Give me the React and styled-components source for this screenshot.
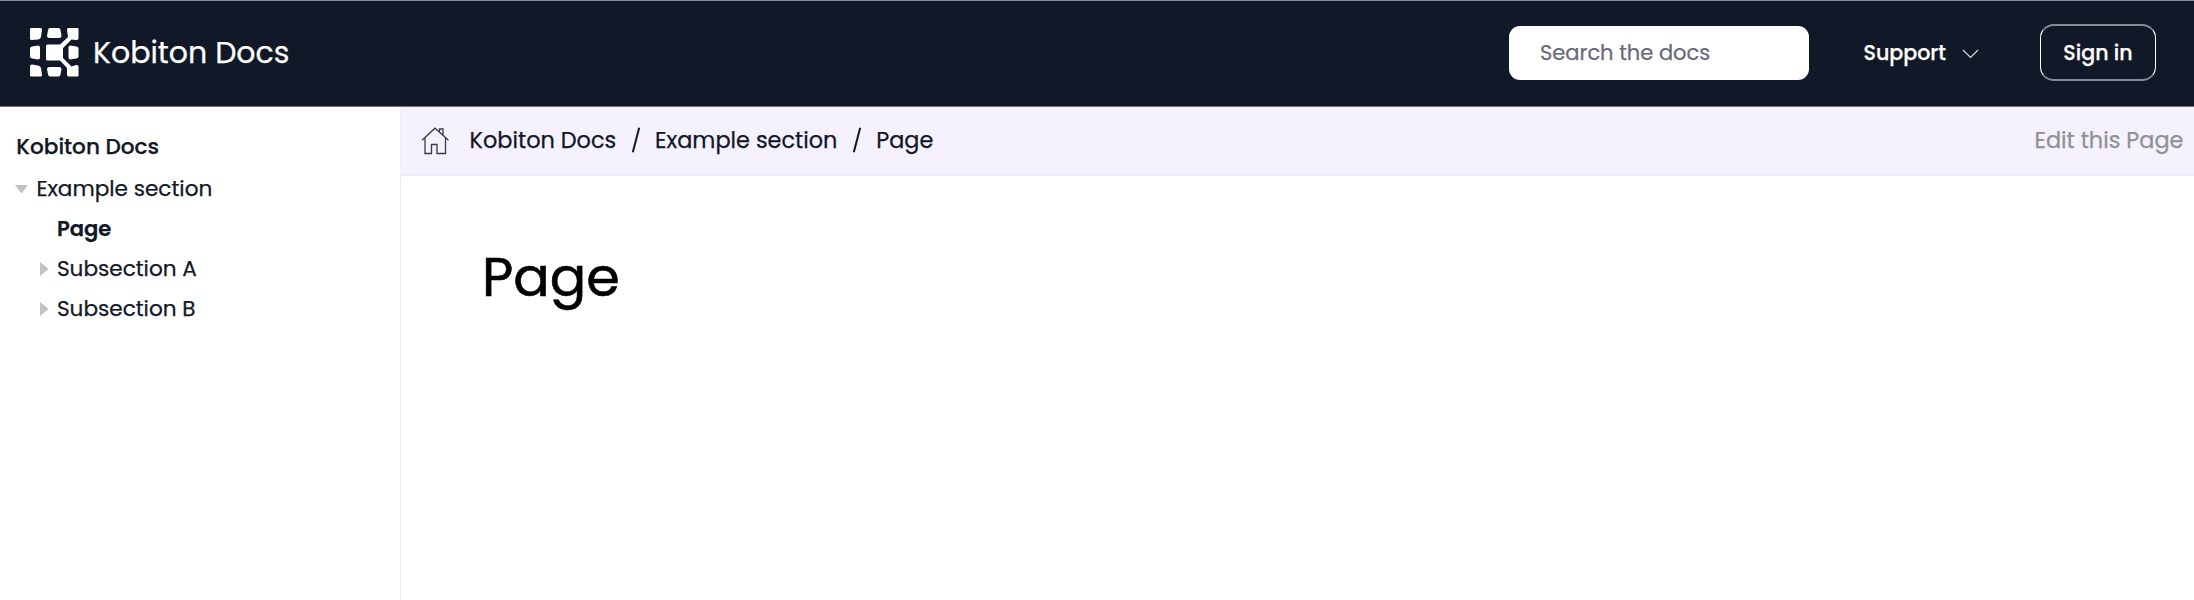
import React from "react";
import styled, { createGlobalStyle } from "styled-components";

const GlobalStyle = createGlobalStyle`
  *, *::before, *::after { box-sizing: border-box; }
  body {
    margin: 0;
    background: #fff;
    color: #111827;
    font-family: Poppins, Inter, "Liberation Sans", sans-serif;
    font-feature-settings: "cv11" 1;
    font-size: 21.6px;
    line-height: 40px;
    -webkit-font-smoothing: antialiased;
    -webkit-text-stroke: 0.25px currentColor;
  }
`;

const Page = styled.div`
  display: flex;
  flex-direction: column;
  height: 600px;
  overflow: hidden;
`;

const Text = styled.span`
  font-size: ${(p) => p.$size || 21.6}px;
  font-weight: ${(p) => p.$weight || 400};
  white-space: nowrap;
`;

const Header = styled.header`
  display: flex;
  align-items: center;
  height: 107px;
  flex: none;
  padding: 0 38px 2px 30px;
  background: #111827;
  border-top: 1px solid #878c95;
  border-bottom: 1px solid #70747d;
  color: #fff;
`;

const Brand = styled.a`
  display: flex;
  align-items: center;
  gap: 14px;
  margin-right: auto;
`;

const Logo = styled.svg`
  display: block;
  width: 49px;
  height: 49px;
`;

const SearchBox = styled.div`
  display: flex;
  align-items: center;
  width: 300px;
  height: 54px;
  margin: 0 54px 0 0;
  padding: 1px 0 0 31px;
  border-radius: 11px;
  background: #fff;
  color: #686c78;
`;

const SupportMenu = styled.a`
  display: flex;
  align-items: center;
  justify-content: space-between;
  width: 116px;
  padding-left: 0.5px;
  margin-right: 61px;
`;

const Chevron = styled.svg`
  width: 17px;
  height: 10px;
  margin-top: 2px;
`;

const SignIn = styled.a`
  display: flex;
  align-items: center;
  justify-content: center;
  width: 116px;
  height: 57px;
  border: 1px solid #fff;
  border-width: 2px 1px;
  border-color: #868b94 #fff;
  border-radius: 14px;
`;

const Body = styled.div`
  display: flex;
  flex: 1;
`;

const Sidebar = styled.nav`
  width: 401px;
  flex: none;
  padding: 20px 15px;
  border-right: 1px solid #efefef;
`;

const NavTitle = styled.div`
  display: flex;
  height: 42px;
  padding-left: 1.3px;
`;

const NavRow = styled.div`
  display: flex;
  align-items: center;
  height: 40.1px;
  padding-left: ${(p) => p.$depth * 20.5}px;
`;

const ToggleSlot = styled.span`
  display: flex;
  justify-content: flex-start;
  width: 21.4px;
  padding-left: ${(p) => (p.$open ? 0.3 : 4)}px;
`;

const Triangle = styled.svg`
  display: block;
  width: ${(p) => (p.$open ? 13 : 8.5)}px;
  height: ${(p) => (p.$open ? 8.5 : 14)}px;
  fill: #c2c2c2;
`;

const Main = styled.main`
  flex: 1;
`;

const Toolbar = styled.div`
  display: flex;
  align-items: center;
  height: 69px;
  padding: 0 10.5px 0 20px;
  background: #f5f1ff;
  border-bottom: 2px solid #ede9fc;
`;

const HomeIcon = styled.svg`
  width: 28px;
  height: 28px;
  margin-right: 20.6px;
`;

const Crumbs = styled.div`
  display: flex;
  align-items: center;
  padding-bottom: 1px;
`;

const Slash = styled.svg`
  width: 10px;
  height: 26px;
  margin: 0 14px 0 14.8px;
`;

const EditLink = styled.a`
  margin-left: auto;
  padding-bottom: 1px;
  color: #919191;
`;

const Article = styled.article`
  padding: 69px 81px;
`;

const Title = styled.h1`
  margin: 0;
  color: #000;
  font-size: 54px;
  font-weight: 400;
  line-height: 64px;
  -webkit-text-stroke: 0.6px #000;
`;

function Toggle({ open }) {
  return (
    <ToggleSlot $open={open}>
      {open !== undefined && (
        <Triangle $open={open} viewBox={open ? "0 0 13 8.5" : "0 0 8.5 14"}>
          <path d={open ? "M0 0h13L6.5 8.5z" : "M0 0v14L8.5 7z"} />
        </Triangle>
      )}
    </ToggleSlot>
  );
}

function Separator() {
  return (
    <Slash viewBox="0 0 10 26">
      <path d="M8.2.7 1.8 25.3" stroke="#111827" strokeWidth="2" fill="none" />
    </Slash>
  );
}

const rows = [
  { label: "Example section", depth: 0, open: true },
  { label: "Page", depth: 1, weight: 600, size: 21.1 },
  { label: "Subsection A", depth: 1, open: false },
  { label: "Subsection B", depth: 1, open: false },
];

export default function App() {
  return (
    <>
      <GlobalStyle />
      <Page>
        <Header>
          <Brand>
            <Logo viewBox="0 0 49 49" fill="#fff">
              <path d="M1 0H10.500Q12 0 12 1.500L11 9Q10.500 11 8 11.500L1.500 12Q0 12 0 10.500V1Q0 0 1 0Z" />
              <path d="M20 0H28.500Q30 0 30.500 2L31.500 8Q31.500 10 29 10H19.500Q17 10 17 8L18 2Q18.500 0 20 0Z" />
              <path d="M38 0H47.500Q48.500 0 48.500 1V10.500Q48.500 12 46 12L41.500 11.500 33 20V30L41.500 38.500 46 37Q48.500 36.500 48.500 38.500V47.500Q48.500 48.500 47.500 48.500H38.500Q37 48.500 37 46.500V40L30 32.500H17.500Q16 32.500 16 31V18Q16 16.500 17.500 16.500H30L38 9 37 2Q37 0 38 0Z" />
              <path d="M2 18.500 8 17.500Q10 17.500 10 19.500V29.500Q10 31.500 8 31.500L2 30.500Q0 30 0 28.500V20.500Q0 19 2 18.500Z" />
              <path d="M46.500 18.500 40.500 17.500Q38.500 17.500 38.500 19.500V29.500Q38.500 31.500 40.500 31.500L46.500 30.500Q48.500 30 48.500 28.500V20.500Q48.500 19 46.500 18.500Z" />
              <path d="M2 36.500 8 37.500Q10.500 38 11 40L12 47Q12 48.500 10.500 48.500H1Q0 48.500 0 47.500V38Q0 36.500 2 36.500Z" />
              <path d="M19.500 39H29Q31.500 39 31.500 41L30.500 46.500Q30 48.500 28.500 48.500H20Q18.500 48.500 18 46.500L17 41Q17 39 19.500 39Z" />
            </Logo>
            <Text $size={30}>Kobiton Docs</Text>
          </Brand>
          <SearchBox>
            <Text $size={21}>Search the docs</Text>
          </SearchBox>
          <SupportMenu>
            <Text $size={20.6} $weight={500}>Support</Text>
            <Chevron viewBox="0 0 17 10">
              <path d="M1 1l7.500 7.500L16 1" stroke="#d9dbdf" strokeWidth="1.200" fill="none" />
            </Chevron>
          </SupportMenu>
          <SignIn>
            <Text $size={20.6} $weight={500}>Sign in</Text>
          </SignIn>
        </Header>
        <Body>
          <Sidebar>
            <NavTitle>
              <Text $weight={500}>Kobiton Docs</Text>
            </NavTitle>
            {rows.map((r) => (
              <NavRow key={r.label} $depth={r.depth}>
                <Toggle open={r.open} />
                <Text $size={r.size} $weight={r.weight}>{r.label}</Text>
              </NavRow>
            ))}
          </Sidebar>
          <Main>
            <Toolbar>
              <HomeIcon viewBox="0 0 28 28" fill="none" stroke="#3c3b42" strokeWidth="1.300">
                <path d="M1 13.200 14 1.200 27.500 13.200M4 10.500V26.500H10.500V17.500H16V26.500H24.500V10.500M18.500 5V2H22V8.300" />
              </HomeIcon>
              <Crumbs>
                <Text $size={22.4}>Kobiton Docs</Text>
                <Separator />
                <Text $size={22.4}>Example section</Text>
                <Separator />
                <Text $size={22.4}>Page</Text>
              </Crumbs>
              <EditLink>
                <Text $size={22.4}>Edit this Page</Text>
              </EditLink>
            </Toolbar>
            <Article>
              <Title>Page</Title>
            </Article>
          </Main>
        </Body>
      </Page>
    </>
  );
}
